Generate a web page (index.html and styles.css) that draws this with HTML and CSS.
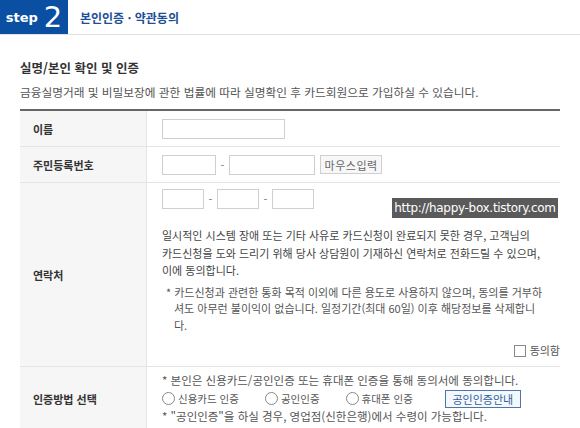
FILE: index.html
```html
<!DOCTYPE html>
<html lang="ko">
<head>
  <meta charset="UTF-8" />
  <title>본인인증 · 약관동의</title>
  <link rel="stylesheet" href="styles.css">
</head>
<body>

  <!-- 단계 헤더 -->
  <div class="step-head">
    <div class="step-no"><span class="step-word">step</span><span class="step-num">2</span></div>
    <div class="step-title">본인인증 · 약관동의</div>
  </div>

  <div class="wrap">
    <h3 class="sec-title">실명/본인 확인 및 인증</h3>
    <p class="sec-desc">금융실명거래 및 비밀보장에 관한 법률에 따라 실명확인 후 카드회원으로 가입하실 수 있습니다.</p>

    <table class="form-table">
      <tr class="row-short">
        <th>이름</th>
        <td><input type="text" class="inp w-name" /></td>
      </tr>
      <tr class="row-short">
        <th>주민등록번호</th>
        <td>
          <input type="text" class="inp w-jumin1" /><span class="dash">-</span><input type="text" class="inp w-jumin2" />
          <button class="btn-gray">마우스입력</button>
        </td>
      </tr>
      <tr>
        <th>연락처</th>
        <td class="contact">
          <div class="phone">
            <input type="text" class="inp w-tel" /><span class="dash">-</span><input type="text" class="inp w-tel" /><span class="dash">-</span><input type="text" class="inp w-tel" />
          </div>
          <p class="agree-text">일시적인 시스템 장애 또는 기타 사유로 카드신청이 완료되지 못한 경우, 고객님의<br>카드신청을 도와 드리기 위해 당사 상담원이 기재하신 연락처로 전화드릴 수 있으며,<br>이에 동의합니다.</p>
          <p class="note">* 카드신청과 관련한 통화 목적 이외에 다른 용도로 사용하지 않으며, 동의를 거부하<br>셔도 아무런 불이익이 없습니다. 일정기간(최대 60일) 이후 해당정보를 삭제합니<br>다.</p>
          <div class="agree-check"><span class="chk"></span>동의함</div>
        </td>
      </tr>
      <tr>
        <th>인증방법 선택</th>
        <td class="auth">
          <p>* 본인은 신용카드/공인인증 또는 휴대폰 인증을 통해 동의서에 동의합니다.</p>
          <div class="radios">
            <label class="radio"><span class="dot"></span>신용카드 인증</label>
            <label class="radio"><span class="dot"></span>공인인증</label>
            <label class="radio"><span class="dot"></span>휴대폰 인증</label>
            <button class="btn-blue">공인인증안내</button>
          </div>
          <p>* "공인인증"을 하실 경우, 영업점(신한은행)에서 수령이 가능합니다.</p>
        </td>
      </tr>
    </table>

    <div class="watermark">http://happy-box.tistory.com</div>
  </div>

</body>
</html>
```

FILE: styles.css
```css
body {
  margin: 0; width: 580px; height: 428px; overflow: hidden;
  font-family: "Noto Sans CJK KR", "Liberation Sans", sans-serif;
  font-size: 11px; color: #555; background: #fff;
}
p { margin: 0; }

.step-head {
  display: flex; align-items: center; height: 34px;
  border-bottom: 1px solid #e2e2e2;
}
.step-no {
  width: 68px; height: 34px; background: #0b4fa3; color: #fff;
  display: flex; align-items: center; justify-content: center; gap: 6px;
  font-family: "DejaVu Sans", sans-serif; font-weight: bold;
}
.step-word { font-size: 13px; }
.step-num { font-size: 29px; font-weight: normal; line-height: 1; }
.step-title { margin-left: 12px; font-size: 12px; font-weight: bold; color: #1c4f96; }

.wrap { position: relative; padding: 25px 20px 0; }
.sec-title { margin: 0; font-size: 12.5px; font-weight: bold; color: #333; line-height: 16px; }
.sec-desc { margin-top: 8px; font-size: 11.7px; line-height: 16px; color: #555; }

.form-table {
  width: 540px; margin-top: 9px; border-collapse: collapse;
  border-top: 2px solid #666;
}
.form-table th {
  width: 112px; padding-left: 13px; text-align: left;
  background: #f6f6f6; color: #333; font-weight: bold;
  border-bottom: 1px solid #e4e4e4; border-right: 1px solid #e4e4e4;
}
.form-table td { padding: 0 0 0 15px; border-bottom: 1px solid #e4e4e4; }
.row-short th, .row-short td { height: 33px; }

.inp {
  height: 18px; border: 1px solid #cfcfcf; padding: 0; margin: 0;
  vertical-align: middle; box-sizing: content-box;
}
.w-name { width: 121px; }
.w-jumin1 { width: 52px; }
.w-jumin2 { width: 84px; }
.w-tel { width: 40px; }
.dash { display: inline-block; width: 13px; text-align: center; color: #777; vertical-align: middle; }

.btn-gray {
  margin-left: 2px; width: 62px; height: 19px; padding: 0; vertical-align: middle;
  border: 1px solid #cfcfcf; background: #f7f7f7; color: #666;
  font-family: inherit; font-size: 11px; letter-spacing: 0.5px;
}

.contact { padding-top: 6px !important; padding-bottom: 8px !important; white-space: nowrap; }
.phone { height: 20px; }
.agree-text { margin-top: 18px; line-height: 17.5px; color: #444; }
.note { margin-top: 4px; padding-left: 12px; text-indent: -8px; line-height: 16.5px; color: #555; }
.agree-check { margin-top: 9px; text-align: right; color: #555; }
.chk {
  display: inline-block; width: 10px; height: 10px; border: 1px solid #888;
  margin-right: 4px; vertical-align: -2px;
}

.auth { padding-top: 5px !important; padding-bottom: 6px !important; line-height: 17px; font-size: 11.5px; }
.radios { display: flex; align-items: center; height: 19px; }
.radio { display: flex; align-items: center; margin-right: 26px; font-size: 10.5px; }
.dot {
  display: inline-block; width: 11px; height: 11px; border: 1px solid #8a8a8a;
  border-radius: 50%; margin-right: 3px;
}
.btn-blue {
  margin-left: 6px; height: 18px; width: 76px; padding: 0;
  border: 1px solid #4a76a8; background: #f4f8fc; color: #2f5f9a;
  font-family: inherit; font-size: 11px;
}

.watermark {
  position: absolute; left: 392px; top: 163px;
  width: 166px; height: 20px; line-height: 20px; text-align: center;
  background: #5a5a5a; color: #fff; white-space: nowrap;
  font-family: "DejaVu Sans", sans-serif; font-size: 12px; letter-spacing: -0.3px;
}
```
